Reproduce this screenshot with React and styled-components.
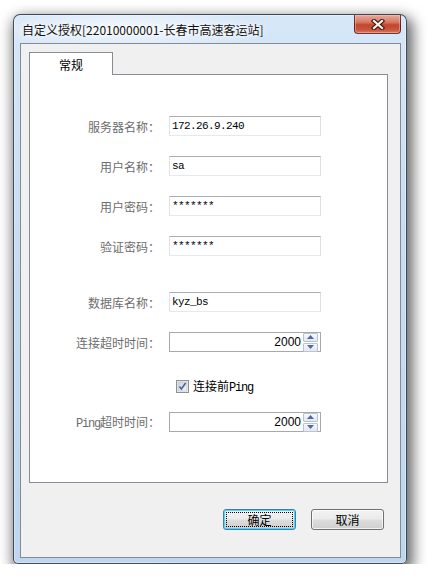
import React from "react";
import styled, { createGlobalStyle } from "styled-components";

const GlobalStyle = createGlobalStyle`
  body {
    margin: 0;
    background: #ffffff;
    font-family: "Noto Sans CJK SC", "Liberation Sans", sans-serif;
  }
`;

const CJK = `"Noto Sans CJK SC", "Liberation Sans", sans-serif`;
const MONO = `"Liberation Mono", "Noto Sans CJK SC", monospace`;

function CloseGlyph() {
    return (
        <svg width="14" height="11" viewBox="0 0 14 11">
            <path d="M3 2 L11 9 M11 2 L3 9" stroke="#4a1a12" strokeWidth="4.4" strokeLinecap="square" />
            <path d="M3 2 L11 9 M11 2 L3 9" stroke="#f4f4f4" strokeWidth="2.2" strokeLinecap="square" />
        </svg>
    );
}

function CheckGlyph() {
    return (
        <svg width="13" height="13" viewBox="0 0 13 13">
            <defs>
                <linearGradient id="cbFill" x1="0" y1="0" x2="1" y2="1">
                    <stop offset="0" stopColor="#cdd1d8" />
                    <stop offset="1" stopColor="#f4f5f7" />
                </linearGradient>
            </defs>
            <rect x="0.5" y="0.5" width="12" height="12" fill="#f4f4f4" stroke="#8e8f8f" />
            <rect x="2" y="2" width="9" height="9" fill="url(#cbFill)" stroke="#b7bcc4" strokeWidth="0.6" />
            <path d="M3.4 6.4 L5.4 9 L9.6 3" fill="none" stroke="#4a64a0" strokeWidth="1.6" />
        </svg>
    );
}

function SpinButtons() {
    return (
        <Spin>
            <SpinHalf>
                <svg width="7" height="4" viewBox="0 0 7 4"><path d="M0 4 L3.5 0 L7 4 Z" fill="#4d6a9c" /></svg>
            </SpinHalf>
            <SpinHalf>
                <svg width="7" height="4" viewBox="0 0 7 4"><path d="M0 0 L3.5 4 L7 0 Z" fill="#4d6a9c" /></svg>
            </SpinHalf>
        </Spin>
    );
}

function App() {
    return (
        <>
            <GlobalStyle />
            <Window>
                <TitleBar>
                    <Title>自定义授权[22010000001-长春市高速客运站]</Title>
                    <CloseButton><CloseGlyph /></CloseButton>
                </TitleBar>
                <Client>
                    <TabStrip>
                        <Tab>常规</Tab>
                    </TabStrip>
                    <TabPanel>
                        <Row $top={0}>
                            <Label>服务器名称：</Label>
                            <TextBox>172.26.9.240</TextBox>
                        </Row>
                        <Row $top={20}>
                            <Label>用户名称：</Label>
                            <TextBox>sa</TextBox>
                        </Row>
                        <Row $top={20}>
                            <Label>用户密码：</Label>
                            <TextBox>*******</TextBox>
                        </Row>
                        <Row $top={20}>
                            <Label>验证密码：</Label>
                            <TextBox>*******</TextBox>
                        </Row>
                        <Row $top={36}>
                            <Label>数据库名称：</Label>
                            <TextBox>kyz_bs</TextBox>
                        </Row>
                        <Row $top={20}>
                            <Label>连接超时时间：</Label>
                            <NumberBox>
                                <NumberValue>2000</NumberValue>
                                <SpinButtons />
                            </NumberBox>
                        </Row>
                        <Row $top={24}>
                            <span />
                            <CheckRow>
                                <CheckGlyph />
                                <CheckText>连接前<Ascii>Ping</Ascii></CheckText>
                            </CheckRow>
                        </Row>
                        <Row $top={16}>
                            <Label><Ascii>Ping</Ascii>超时时间：</Label>
                            <NumberBox>
                                <NumberValue>2000</NumberValue>
                                <SpinButtons />
                            </NumberBox>
                        </Row>
                    </TabPanel>
                    <Footer>
                        <Button $primary><FocusRect>确定</FocusRect></Button>
                        <Button>取消</Button>
                    </Footer>
                </Client>
            </Window>
        </>
    );
}

export default App;

const Window = styled.div`
    margin: 14px 0 0 13px;
    width: 394px;
    height: 550px;
    box-sizing: border-box;
    border: 1px solid rgba(40, 48, 60, 0.85);
    border-radius: 7px 7px 5px 5px;
    padding: 0 5px 5px 6px;
    display: flex;
    flex-direction: column;
    background:
        radial-gradient(ellipse 150px 22px at 110px 14px, rgba(255,255,255,0.75), rgba(255,255,255,0) 100%),
        linear-gradient(180deg, #d6e7f8 0%, #c8ddf3 40%, #bed6f0 100%);
    box-shadow: 0 0 0 1px rgba(255,255,255,0.35) inset, 3px 6px 14px 3px rgba(0, 0, 0, 0.6);
`;

const TitleBar = styled.div`
    height: 28px;
    display: flex;
    align-items: center;
    justify-content: space-between;
    padding-left: 2px;
`;

const Title = styled.span`
    font-family: ${CJK};
    font-size: 12px;
    color: #111111;
    text-shadow: 0 0 6px #ffffff, 0 0 3px #ffffff;
    white-space: nowrap;
`;

const CloseButton = styled.div`
    align-self: flex-start;
    width: 45px;
    height: 18px;
    border: 1px solid rgba(70, 20, 15, 0.75);
    border-top: none;
    border-radius: 0 0 4px 4px;
    display: flex;
    align-items: center;
    justify-content: center;
    background: linear-gradient(180deg, #e9aa9c 0%, #d77864 40%, #c3462b 55%, #c5553b 80%, #d8785f 100%);
    box-shadow: inset 0 0 0 1px rgba(255, 200, 190, 0.45);
`;

const Client = styled.div`
    flex: 1;
    border: 1px solid #838b96;
    background: #f0f0f0;
    padding: 8px 0 0 8px;
    display: flex;
    flex-direction: column;
`;

const TabStrip = styled.div`
    display: flex;
`;

const Tab = styled.div`
    position: relative;
    z-index: 1;
    width: 82px;
    height: 22px;
    margin-bottom: -1px;
    border: 1px solid #898c95;
    border-bottom: none;
    background: #ffffff;
    font-family: ${CJK};
    font-size: 12px;
    color: #000;
    display: flex;
    align-items: center;
    justify-content: center;
`;

const TabPanel = styled.div`
    width: 357px;
    height: 366px;
    padding-top: 41px;
    border: 1px solid #898c95;
    background: #ffffff;
`;

const Row = styled.div`
    display: grid;
    grid-template-columns: 130px 152px;
    column-gap: 9px;
    align-items: center;
    height: 20px;
    margin-top: ${(p) => p.$top}px;
`;

const Label = styled.span`
    text-align: right;
    font-family: ${CJK};
    font-size: 12px;
    color: #6d6d6d;
    white-space: nowrap;
`;

const Ascii = styled.span`
    font-family: ${MONO};
    font-size: 12px;
    letter-spacing: -1.2px;
`;

const TextBox = styled.div`
    height: 20px;
    box-sizing: border-box;
    border: 1px solid;
    border-color: #abadb3 #dbdfe6 #e3e9ef #e2e3ea;
    padding: 0 2px;
    display: flex;
    align-items: center;
    font-family: ${MONO};
    font-size: 11px;
    letter-spacing: -0.6px;
    color: #000;
    background: #fff;
`;

const NumberBox = styled.div`
    height: 20px;
    box-sizing: border-box;
    border: 1px solid #a9a9a9;
    display: flex;
    align-items: center;
    justify-content: flex-end;
    padding-right: 2px;
    background: #fff;
`;

const NumberValue = styled.span`
    font-family: "Liberation Sans", Arial, sans-serif;
    font-size: 12px;
    color: #000;
    margin-right: 2px;
`;

const Spin = styled.div`
    display: flex;
    flex-direction: column;
    gap: 1px;
`;

const SpinHalf = styled.div`
    width: 13px;
    height: 7px;
    border: 1px solid #b8c3d4;
    border-radius: 1px;
    background: linear-gradient(180deg, #f6f8fb 0%, #e1e7f0 100%);
    display: flex;
    align-items: center;
    justify-content: center;
`;

const CheckRow = styled.div`
    display: flex;
    align-items: center;
    gap: 4px;
    padding-left: 7px;
`;

const CheckText = styled.span`
    font-family: ${CJK};
    font-size: 12px;
    color: #000;
    white-space: nowrap;
`;

const Footer = styled.div`
    display: flex;
    justify-content: flex-end;
    gap: 15px;
    padding-right: 16px;
    margin-top: 26px;
`;

const Button = styled.div`
    width: 73px;
    height: 21px;
    box-sizing: border-box;
    border: 1px solid ${(p) => (p.$primary ? "#3c7fb1" : "#707070")};
    border-radius: 3px;
    background: linear-gradient(180deg, #f2f2f2 0%, #ebebeb 48%, #dddddd 52%, #cfcfcf 100%);
    box-shadow: ${(p) => (p.$primary ? "inset 0 0 0 1px #48d6fb" : "inset 0 0 0 1px rgba(255,255,255,0.7)")};
    display: flex;
    align-items: center;
    justify-content: center;
    padding: 2px;
    font-family: ${CJK};
    font-size: 12px;
    color: #000;
`;

const FocusRect = styled.span`
    flex: 1;
    align-self: stretch;
    border: 1px dotted #000;
    display: flex;
    align-items: center;
    justify-content: center;
`;
